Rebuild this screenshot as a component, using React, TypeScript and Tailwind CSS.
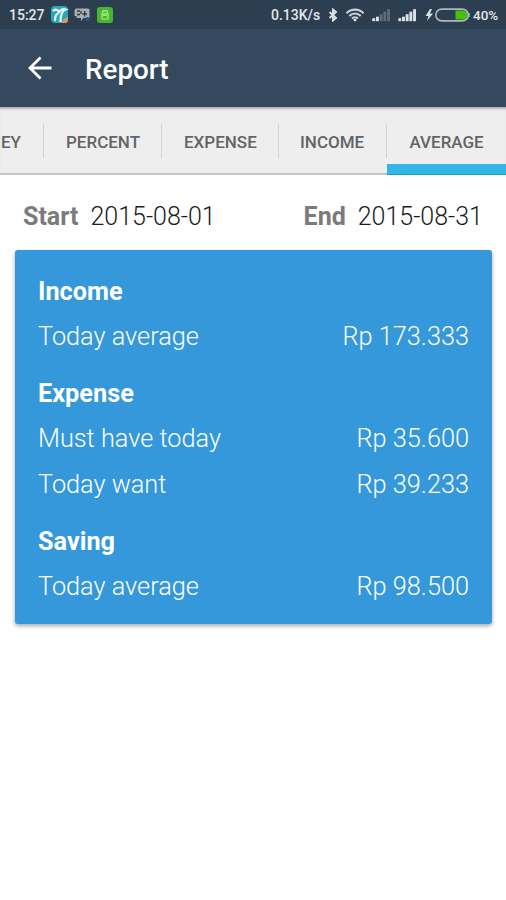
import { clsx } from "clsx";

type Row = { label: string; value: string };
type Section = { title: string; rows: Row[] };

const sections: Section[] = [
  { title: "Income", rows: [{ label: "Today average", value: "Rp 173.333" }] },
  {
    title: "Expense",
    rows: [
      { label: "Must have today", value: "Rp 35.600" },
      { label: "Today want", value: "Rp 39.233" },
    ],
  },
  { title: "Saving", rows: [{ label: "Today average", value: "Rp 98.500" }] },
];

const tabs = [
  { label: "EY", width: "w-[44px]", pad: "pl-px" },
  { label: "PERCENT", width: "w-[118px]", pad: "pl-[22px]" },
  { label: "EXPENSE", width: "w-[117px]", pad: "pl-[22px]" },
  { label: "INCOME", width: "w-[108px]", pad: "pl-[21px]" },
  { label: "AVERAGE", width: "w-[119px]", pad: "pl-[22.500px]", active: true },
];

function AppIcons() {
  return (
    <svg width="66" height="20" viewBox="0 0 66 20">
      {/* teal app with a palm shape */}
      <rect x="3" y="1" width="17" height="17" rx="4" fill="#27a9b9" />
      <path
        d="M5 6c2.500-2.500 5.500-1.500 6 2 .5-3 3.500-4.500 6.500-3.500C13.500 6 12.500 10 12.500 17M10.500 8.500C8 9 7 12 7 16"
        fill="none"
        stroke="#eefafa"
        strokeWidth="2.2"
      />
      <path d="M13.500 18c1.500-4 3.500-5 6.500-6v3a3 3 0 0 1-3 3z" fill="#d29a5e" />
      {/* chat bubble */}
      <path d="M28 3.500h12a1.500 1.500 0 0 1 1.500 1.500v8h-6l-2.500 3v-3h-4.500v-2h-2v-6z" fill="#a6adb3" />
      <path d="M29 6h3M29 9.500h3M34.500 9h4.500M36.700 6v5.500M33 6v3" stroke="#2c3845" strokeWidth="1.300" />
      <circle cx="39.500" cy="14" r="2" fill="#1d5aa0" />
      {/* green app */}
      <rect x="49" y="2" width="16" height="16" rx="3" fill="#48b633" />
      <path
        d="M54 14v-5.500l1-2.700h4l1 2.700v5.500zM55.800 8.500h2.400v2h-2.400z"
        fill="none"
        stroke="#a9ef83"
        strokeWidth="1.200"
      />
    </svg>
  );
}

function Bluetooth() {
  return (
    <svg width="10" height="14" viewBox="0 0 10 14">
      <path
        d="M1.500 4l6.500 6-3 2.500v-11l3 2.500-6.500 6"
        fill="none"
        stroke="#dce1e5"
        strokeWidth="1.900"
      />
    </svg>
  );
}

function Wifi() {
  return (
    <svg width="20" height="14" viewBox="0 0 20 14">
      <g fill="none" stroke="#cbd1d6" strokeWidth="2.100">
        <path d="M1.500 5.200a12 12 0 0 1 17 0" />
        <path d="M4.300 7.900a8 8 0 0 1 11.400 0" />
        <path d="M7 10.500a4.200 4.200 0 0 1 6 0" />
      </g>
      <path d="M8.200 11.700a2.600 2.600 0 0 1 3.600 0L10 13.700z" fill="#e8ebee" />
    </svg>
  );
}

function Signal({ level }: { level: number }) {
  return (
    <svg width="19" height="14" viewBox="0 0 19 14">
      {[3, 4.5, 7, 9.5, 12].map((h, i) => (
        <rect
          key={i}
          x={0.3 + i * 3.7}
          y={13.2 - h}
          width="2.9"
          height={h}
          fill={i < level ? "#dce1e5" : "#5d6b79"}
        />
      ))}
    </svg>
  );
}

function Battery() {
  return (
    <svg width="46" height="14" viewBox="0 0 46 14">
      <path d="M5 1L0.500 8h3L2 13l6-7.500H4.800L7 1z" fill="#dce1e5" />
      <path d="M30.500 2.500H38a4.500 4.500 0 0 1 0 9h-7.500z" fill="#45c00c" />
      <rect x="10.800" y="1.100" width="32.500" height="11.800" rx="5.900" fill="none" stroke="#aeb6bd" strokeWidth="1.600" />
      <path d="M44 5v4" stroke="#aeb6bd" strokeWidth="1.500" />
    </svg>
  );
}

function StatusBar() {
  return (
    <div className="flex h-[29px] items-center bg-[#2c3e50] font-medium text-[#e2e6e9]">
      <span className="ml-[9px] w-[39px] pt-[2px] text-[14px]">15:27</span>
      <AppIcons />
      <span className="ml-auto w-[57px] pt-[2px] text-[14px]">0.13K/s</span>
      <div className="flex w-[178px] items-center">
        <Bluetooth />
        <span className="ml-[7px] flex"><Wifi /></span>
        <span className="ml-[7px] flex"><Signal level={2} /></span>
        <span className="ml-[7px] flex"><Signal level={5} /></span>
        <span className="ml-[8px] flex"><Battery /></span>
        <span className="ml-[2px] pt-px text-[13.500px]">40%</span>
      </div>
    </div>
  );
}

function DateField({ label, value }: { label: string; value: string }) {
  return (
    <div className="flex gap-3">
      <span className="font-bold text-[#7b7b7b]">{label}</span>
      <span className="font-light text-[#1c1c1c]">{value}</span>
    </div>
  );
}

export default function App() {
  return (
    <div className="h-[900px] w-[506px] overflow-hidden bg-white font-['Roboto',sans-serif]">
      <StatusBar />

      {/* App bar */}
      <header className="flex h-[78px] items-center bg-[#34495e] text-white">
        <svg className="ml-7" width="24" height="24" viewBox="0 0 24 24">
          <path d="M23.500 12H2.500M12.500 1.500L2 12l10.500 10.500" fill="none" stroke="white" strokeWidth="2.800" />
        </svg>
        <h1 className="ml-[33px] pt-[3px] text-[27.800px] font-medium">Report</h1>
      </header>

      {/* Tabs */}
      <nav className="flex h-[68px] border-b-2 border-[#c6c6c6] bg-[#eeeeee] shadow-[inset_0_3px_2px_-1px_#b4b5b2]">
        {tabs.map((tab) => (
          <div
            key={tab.label}
            className={clsx(
              "flex shrink-0 flex-col",
              tab.width,
              tab.active && "-mb-[2px]"
            )}
          >
            <div className="flex h-[57px] items-end">
              <div className="flex h-[57px] flex-1 items-center pt-[15px]">
                <span className={clsx("text-[17px] font-medium whitespace-nowrap text-[#646464]", tab.pad)}>
                  {tab.label}
                </span>
              </div>
              {!tab.active && <div className="mb-[6px] h-[34px] w-px bg-[#d2d2d2]" />}
            </div>
            {tab.active && <div className="h-[11px] border-b border-[#249bc7] bg-[#33b5e5]" />}
          </div>
        ))}
      </nav>

      {/* Date range */}
      <div className="flex h-[75px] items-center justify-between pt-[9px] pr-[23px] pl-[23px] text-[25px]">
        <DateField label="Start" value="2015-08-01" />
        <DateField label="End" value="2015-08-31" />
      </div>

      {/* Averages card */}
      <main className="mr-[14px] ml-[15px] flex h-[374px] flex-col gap-[11.500px] rounded-[3px] bg-[#3498db] px-[23px] pt-[19px] text-[25.300px] text-white shadow-[0_2px_4px_rgba(0,0,0,0.35)]">
        {sections.map((section) => (
          <section key={section.title}>
            <h2 className="flex h-[45.400px] items-center font-bold">{section.title}</h2>
            {section.rows.map((row) => (
              <div key={row.label} className="flex h-[45.400px] items-center justify-between font-light">
                <span>{row.label}</span>
                <span>{row.value}</span>
              </div>
            ))}
          </section>
        ))}
      </main>
    </div>
  );
}
